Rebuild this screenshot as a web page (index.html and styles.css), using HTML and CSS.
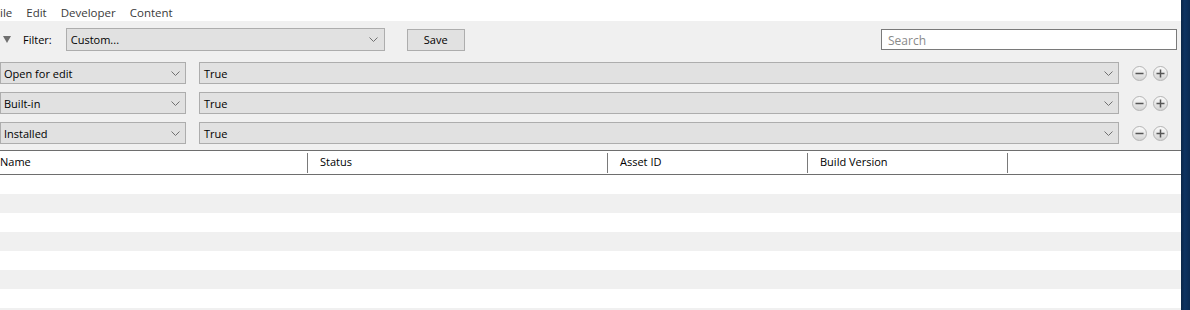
FILE: index.html
```html
<!DOCTYPE html>
<html lang="en">

<head>
    <meta charset="UTF-8">
    <title>Assets</title>
    <link rel="stylesheet" href="styles.css">
</head>

<body>
    <div class="window">
        <div class="main">
            <nav class="menubar">
                <span>ile</span>
                <span>Edit</span>
                <span>Developer</span>
                <span>Content</span>
            </nav>

            <div class="filter-panel">
                <div class="filter-bar">
                    <svg class="collapse" width="8" height="7" viewBox="0 0 8 7">
                        <polygon points="0,0 8,0 4,7" fill="#6f6f6f" />
                    </svg>
                    <span class="filter-label">Filter:</span>
                    <div class="dropdown preset">
                        <span>Custom...</span>
                        <svg class="chevron" width="9" height="5" viewBox="0 0 9 5">
                            <polyline points="0.5,0.5 4.5,4.5 8.5,0.5" fill="none" stroke="#707070" stroke-width="1" />
                        </svg>
                    </div>
                    <button class="save-button">Save</button>
                    <input class="search" type="text" placeholder="Search">
                </div>

                <div class="rule">
                    <div class="dropdown field">
                        <span>Open for edit</span>
                        <svg class="chevron" width="9" height="5" viewBox="0 0 9 5">
                            <polyline points="0.5,0.5 4.5,4.5 8.5,0.5" fill="none" stroke="#707070" stroke-width="1" />
                        </svg>
                    </div>
                    <div class="dropdown value">
                        <span>True</span>
                        <svg class="chevron" width="9" height="5" viewBox="0 0 9 5">
                            <polyline points="0.5,0.5 4.5,4.5 8.5,0.5" fill="none" stroke="#707070" stroke-width="1" />
                        </svg>
                    </div>
                    <span class="round-button"><svg width="9" height="9" viewBox="0 0 9 9"><line x1="0.5" y1="4.5" x2="8.5" y2="4.5" stroke="#555" stroke-width="1.5" /></svg></span>
                    <span class="round-button"><svg width="9" height="9" viewBox="0 0 9 9"><line x1="0.5" y1="4.5" x2="8.5" y2="4.5" stroke="#555" stroke-width="1.5" /><line x1="4.5" y1="0.5" x2="4.5" y2="8.5" stroke="#555" stroke-width="1.5" /></svg></span>
                </div>

                <div class="rule">
                    <div class="dropdown field">
                        <span>Built-in</span>
                        <svg class="chevron" width="9" height="5" viewBox="0 0 9 5">
                            <polyline points="0.5,0.5 4.5,4.5 8.5,0.5" fill="none" stroke="#707070" stroke-width="1" />
                        </svg>
                    </div>
                    <div class="dropdown value">
                        <span>True</span>
                        <svg class="chevron" width="9" height="5" viewBox="0 0 9 5">
                            <polyline points="0.5,0.5 4.5,4.5 8.5,0.5" fill="none" stroke="#707070" stroke-width="1" />
                        </svg>
                    </div>
                    <span class="round-button"><svg width="9" height="9" viewBox="0 0 9 9"><line x1="0.5" y1="4.5" x2="8.5" y2="4.5" stroke="#555" stroke-width="1.5" /></svg></span>
                    <span class="round-button"><svg width="9" height="9" viewBox="0 0 9 9"><line x1="0.5" y1="4.5" x2="8.5" y2="4.5" stroke="#555" stroke-width="1.5" /><line x1="4.5" y1="0.5" x2="4.5" y2="8.5" stroke="#555" stroke-width="1.5" /></svg></span>
                </div>

                <div class="rule">
                    <div class="dropdown field">
                        <span>Installed</span>
                        <svg class="chevron" width="9" height="5" viewBox="0 0 9 5">
                            <polyline points="0.5,0.5 4.5,4.5 8.5,0.5" fill="none" stroke="#707070" stroke-width="1" />
                        </svg>
                    </div>
                    <div class="dropdown value">
                        <span>True</span>
                        <svg class="chevron" width="9" height="5" viewBox="0 0 9 5">
                            <polyline points="0.5,0.5 4.5,4.5 8.5,0.5" fill="none" stroke="#707070" stroke-width="1" />
                        </svg>
                    </div>
                    <span class="round-button"><svg width="9" height="9" viewBox="0 0 9 9"><line x1="0.5" y1="4.5" x2="8.5" y2="4.5" stroke="#555" stroke-width="1.5" /></svg></span>
                    <span class="round-button"><svg width="9" height="9" viewBox="0 0 9 9"><line x1="0.5" y1="4.5" x2="8.5" y2="4.5" stroke="#555" stroke-width="1.5" /><line x1="4.5" y1="0.5" x2="4.5" y2="8.5" stroke="#555" stroke-width="1.5" /></svg></span>
                </div>
            </div>

            <div class="asset-list">
                <div class="list-header">
                    <div class="col col-name">Name</div>
                    <div class="col col-status">Status</div>
                    <div class="col col-asset">Asset ID</div>
                    <div class="col col-build">Build Version</div>
                </div>
                <div class="list-row"></div>
                <div class="list-row"></div>
                <div class="list-row"></div>
                <div class="list-row"></div>
                <div class="list-row"></div>
                <div class="list-row"></div>
                <div class="list-row"></div>
                <div class="list-row"></div>
            </div>
        </div>
        <div class="desktop-edge"></div>
    </div>
</body>

</html>
```

FILE: styles.css
```css
html,
body {
    margin: 0;
    height: 100%;
    overflow: hidden;
}

body {
    font-family: "Open Sans", "Noto Sans", sans-serif;
    font-size: 11px;
    color: #000;
}

.window {
    display: flex;
    height: 100%;
}

.main {
    flex: 1;
    display: flex;
    flex-direction: column;
    background-color: #fff;
    overflow: hidden;
}

.main > * {
    flex-shrink: 0;
}

.desktop-edge {
    width: 9px;
    background: linear-gradient(to right, #0b2647, #0e3361 40%, #0a2a52);
}

.menubar {
    display: flex;
    gap: 14px;
    height: 21px;
    align-items: center;
    padding-top: 4px;
    box-sizing: border-box;
    font-size: 11.5px;
    color: #3a3a3a;
    background-color: #fff;
}

.filter-panel {
    background-color: #f0f0f0;
    padding: 7px 0 6px 0;
    display: flex;
    flex-direction: column;
    gap: 8px;
}

.filter-bar {
    display: flex;
    align-items: center;
    height: 23px;
    padding-left: 3px;
    margin-bottom: 3px;
}

.collapse {
    margin-right: 12px;
}

.filter-label {
    margin-right: 14px;
}

.dropdown {
    display: flex;
    align-items: center;
    justify-content: space-between;
    box-sizing: border-box;
    background-color: #e1e1e1;
    border: 1px solid #adadad;
    padding: 0 5px 0 3px;
}

.preset {
    width: 319px;
    height: 23px;
    padding-left: 4px;
    padding-right: 6px;
}

.save-button {
    margin-left: 22px;
    width: 58px;
    height: 22px;
    font-family: inherit;
    font-size: 11px;
    background-color: #e1e1e1;
    border: 1px solid #adadad;
    padding: 0;
}

.search {
    margin-left: auto;
    margin-right: 4px;
    width: 296px;
    height: 21px;
    box-sizing: border-box;
    border: 1px solid #7a7a7a;
    padding: 2px 6px 0 6px;
    font-family: inherit;
    font-size: 12px;
}

.search::placeholder {
    color: #8a8a8a;
}

.rule {
    display: flex;
    align-items: center;
    height: 22px;
}

.field {
    width: 186px;
    height: 22px;
}

.value {
    flex: 1;
    height: 22px;
    margin-left: 13px;
    padding-left: 4px;
}

.round-button {
    width: 15px;
    height: 15px;
    box-sizing: border-box;
    border-radius: 50%;
    border: 1px solid #b4b4b4;
    background: linear-gradient(to bottom, #fbfbfb, #d4d4d4);
    display: flex;
    align-items: center;
    justify-content: center;
    margin-left: 6px;
}

.value + .round-button {
    margin-left: 13px;
}

.round-button:last-child {
    margin-right: 13px;
}

.asset-list {
    flex: 1;
    min-height: 0;
}

.list-header {
    display: flex;
    height: 23px;
    border-top: 1px solid #6e6e6e;
    border-bottom: 1px solid #6e6e6e;
    background-color: #fff;
}

.col {
    box-sizing: border-box;
    margin: 2px 0 1px 0;
    border-right: 1px solid #7a7a7a;
    padding: 0 0 3px 12px;
    display: flex;
    align-items: center;
}

.col-name {
    width: 308px;
    padding-left: 0;
}

.col-status {
    width: 300px;
}

.col-asset {
    width: 200px;
}

.col-build {
    width: 200px;
}

.list-row {
    height: 19px;
}

.list-row:nth-child(odd) {
    background-color: #f0f0f0;
}
```
